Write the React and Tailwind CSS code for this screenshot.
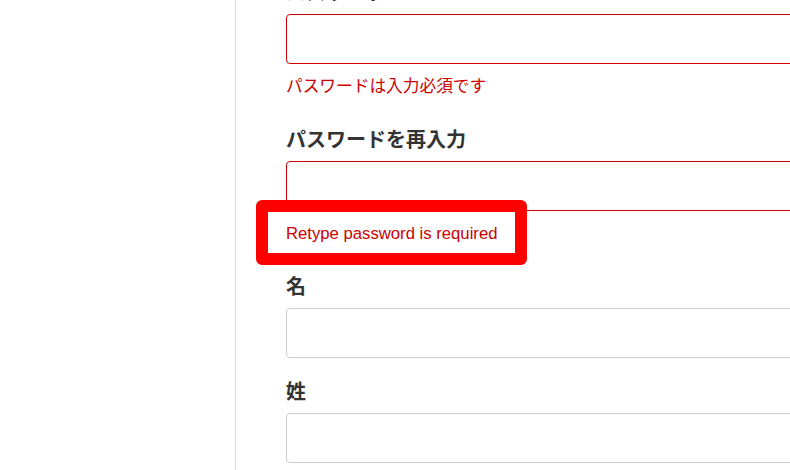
import React from "react";

function Field({ label, error, invalid, highlight }) {
  return (
    <div className="mb-[22px]">
      <label className="block text-[20px] leading-[24px] font-bold text-[#333] mb-[9px]">
        {label}
      </label>
      <input
        type="text"
        className={`block w-[620px] h-[50px] rounded-[4px] bg-white px-3 outline-none border ${
          invalid ? "border-[#c00]" : "border-[#ccc]"
        }`}
      />
      {error && (
        <div className="relative pt-[11px] pb-[7px]">
          <p className="text-[16.7px] leading-[24px] text-[#c00]">{error}</p>
          {highlight && (
            <div className="absolute -left-[30px] -top-[11px] w-[271px] h-[65px] border-[12px] border-[#ff0000] rounded-[6px] pointer-events-none" />
          )}
        </div>
      )}
    </div>
  );
}

export default function App() {
  return (
    <div
      className="flex h-[470px] w-[790px] overflow-hidden bg-white"
      style={{ fontFamily: '"Liberation Sans", "Noto Sans CJK JP", sans-serif' }}
    >
      <aside className="w-[236px] shrink-0 border-r border-[#ddd]" />
      <main className="flex-1 pl-[50px] -mt-[19px]">
        <form>
          <Field label="パスワード" invalid error="パスワードは入力必須です" />
          <Field
            label="パスワードを再入力"
            invalid
            error="Retype password is required"
            highlight
          />
          <Field label="名" />
          <Field label="姓" />
        </form>
      </main>
    </div>
  );
}
